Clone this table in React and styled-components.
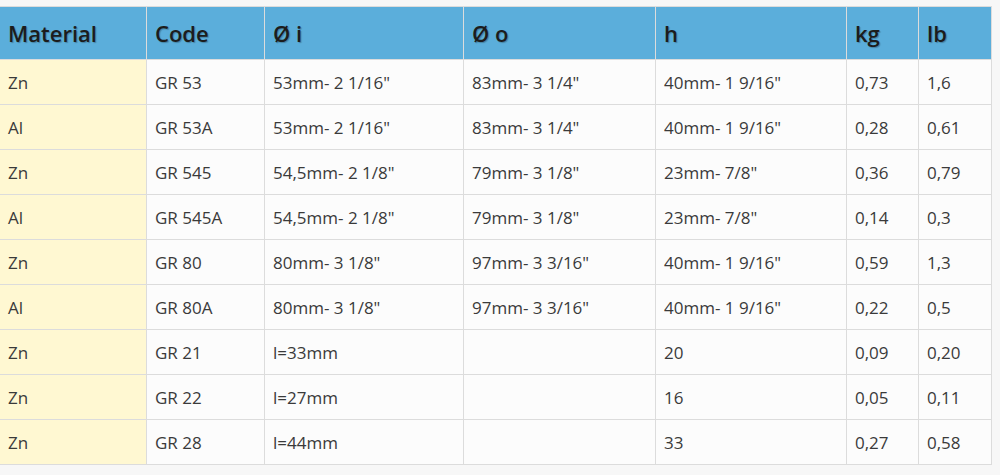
import React from "react";
import styled, { createGlobalStyle } from "styled-components";

const Global = createGlobalStyle`
  html, body { margin: 0; padding: 0; background: #f7f7f7; }
  body { font-family: "Open Sans", "Noto Sans", sans-serif; }
`;

const Wrap = styled.div`
  padding-top: 6px;
  width: 1000px;
  height: 475px;
  overflow: hidden;
`;

const Table = styled.table`
  border-collapse: collapse;
  table-layout: fixed;
  width: 992px;
  margin-left: -1px;
`;

const Th = styled.th`
  background: #5baedb;
  color: #1c1c1c;
  font-size: 22px;
  font-weight: 600;
  letter-spacing: 0;
  text-align: left;
  padding: 0 8px;
  height: 52px;
  border: 1px solid #dcdcdc;
  text-shadow: 1px 1px 1px rgba(0, 0, 0, 0.25);
`;

const Td = styled.td`
  background: ${(p) => (p.$first ? "#fff8d2" : "#fcfcfc")};
  color: #3a3a3a;
  font-size: 17px;
  letter-spacing: 0;
  padding: 0 8px;
  height: 44px;
  border: 1px solid #dcdcdc;
  white-space: nowrap;
`;

const widths = [147, 118, 199, 192, 191, 72, 73];
const heads = ["Material", "Code", "Ø i", "Ø o", "h", "kg", "lb"];
const rows = [
  ["Zn", "GR 53", "53mm- 2 1/16\"", "83mm- 3 1/4\"", "40mm- 1 9/16\"", "0,73", "1,6"],
  ["Al", "GR 53A", "53mm- 2 1/16\"", "83mm- 3 1/4\"", "40mm- 1 9/16\"", "0,28", "0,61"],
  ["Zn", "GR 545", "54,5mm- 2 1/8\"", "79mm- 3 1/8\"", "23mm- 7/8\"", "0,36", "0,79"],
  ["Al", "GR 545A", "54,5mm- 2 1/8\"", "79mm- 3 1/8\"", "23mm- 7/8\"", "0,14", "0,3"],
  ["Zn", "GR 80", "80mm- 3 1/8\"", "97mm- 3 3/16\"", "40mm- 1 9/16\"", "0,59", "1,3"],
  ["Al", "GR 80A", "80mm- 3 1/8\"", "97mm- 3 3/16\"", "40mm- 1 9/16\"", "0,22", "0,5"],
  ["Zn", "GR 21", "l=33mm", "", "20", "0,09", "0,20"],
  ["Zn", "GR 22", "l=27mm", "", "16", "0,05", "0,11"],
  ["Zn", "GR 28", "l=44mm", "", "33", "0,27", "0,58"],
];

export default function App() {
  return (
    <Wrap>
      <Global />
      <Table>
        <colgroup>
          {widths.map((w, i) => (
            <col key={i} style={{ width: w }} />
          ))}
        </colgroup>
        <thead>
          <tr>
            {heads.map((h) => (
              <Th key={h}>{h}</Th>
            ))}
          </tr>
        </thead>
        <tbody>
          {rows.map((r, i) => (
            <tr key={i}>
              {r.map((c, j) => (
                <Td key={j} $first={j === 0}>
                  {c}
                </Td>
              ))}
            </tr>
          ))}
        </tbody>
      </Table>
    </Wrap>
  );
}
